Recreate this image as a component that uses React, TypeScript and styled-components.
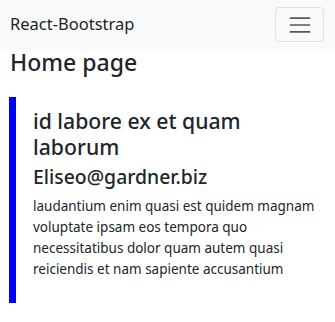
import { createGlobalStyle, styled } from "styled-components";

const GlobalStyle = createGlobalStyle`
  html {
    font-size: 14px;
  }
  body {
    margin: 0;
    font-family: "Noto Sans", "Liberation Sans", sans-serif;
    color: #212529;
    background: #fff;
    line-height: 1.5;
  }
  * {
    box-sizing: border-box;
  }
`;

const Navbar = styled.nav`
  background: #f8f9fa;
  padding: 7px 0;
`;

const NavContainer = styled.div`
  display: flex;
  align-items: center;
  justify-content: space-between;
  padding: 0 11px 0 10px;
`;

const Brand = styled.a`
  font-size: 16.5px;
  color: rgba(0, 0, 0, 0.9);
  text-decoration: none;
  line-height: 1.5;
`;

const Toggler = styled.button`
  display: flex;
  align-items: center;
  justify-content: center;
  width: 49px;
  height: 35px;
  padding: 0;
  background: transparent;
  border: 1px solid rgba(0, 0, 0, 0.1);
  border-radius: 4px;
`;

const Main = styled.main`
  padding: 0 10px;
`;

const PageTitle = styled.h1`
  margin: 0 0 20px;
  font-size: 23px;
  font-weight: 500;
  line-height: 1.2;
`;

const PostCard = styled.article`
  border-left: 7px solid #0000ff;
  margin-left: -1px;
  padding: 11px 10px 23px 17px;
`;

const PostTitle = styled.h3`
  margin: 0 0 5px;
  font-size: 21.2px;
  font-weight: 500;
  line-height: 26px;
`;

const PostEmail = styled.h4`
  margin: 0 0 8px;
  font-size: 19.4px;
  font-weight: 500;
  line-height: 1.2;
`;

const PostBody = styled.p`
  margin: 0;
  font-size: 13.5px;
  line-height: 21px;
`;

const MenuIcon = () => (
  <svg width="26" height="26" viewBox="0 0 30 30">
    <path
      stroke="rgba(33, 37, 41, 0.75)"
      strokeLinecap="round"
      strokeMiterlimit="10"
      strokeWidth="2"
      d="M4 7h22M4 15h22M4 23h22"
    />
  </svg>
);

const App = () => (
  <>
    <GlobalStyle />
    <Navbar>
      <NavContainer>
        <Brand href="#">React-Bootstrap</Brand>
        <Toggler aria-label="Toggle navigation">
          <MenuIcon />
        </Toggler>
      </NavContainer>
    </Navbar>
    <Main>
      <PageTitle>Home page</PageTitle>
      <PostCard>
        <PostTitle>id labore ex et quam laborum</PostTitle>
        <PostEmail>Eliseo@gardner.biz</PostEmail>
        <PostBody>
          laudantium enim quasi est quidem magnam voluptate ipsam eos tempora
          quo necessitatibus dolor quam autem quasi reiciendis et nam sapiente
          accusantium
        </PostBody>
      </PostCard>
    </Main>
  </>
);

export default App;
